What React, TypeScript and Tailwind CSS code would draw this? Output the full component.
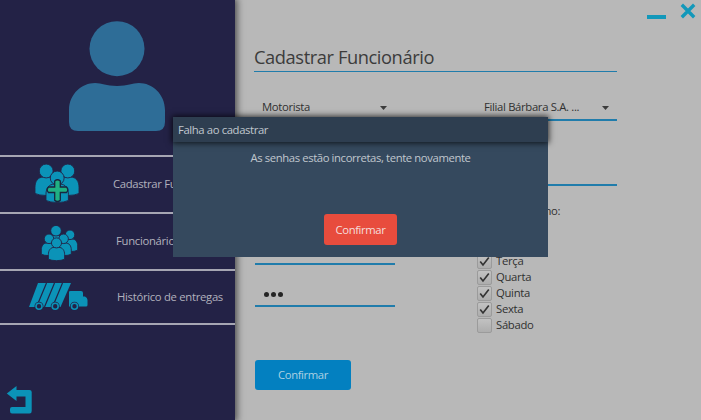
import React from "react";

function Person({ x, y, s }: { x: number; y: number; s: number }) {
  return (
    <g transform={`translate(${x} ${y}) scale(${s})`} stroke="#232246" strokeWidth={0.9 / s}>
      <path d="M-11 22V16C-11 10 -8 6 -3 6H3C8 6 11 10 11 16V22Q7 24 0 24T-11 22Z" />
      <circle cx="0" cy="0" r="6.8" />
    </g>
  );
}

function AddStaffIcon() {
  return (
    <svg className="mb-[2px] block h-[42px] w-[50px]" viewBox="0 0 50 42" fill="#0b93b8">
      <Person x={14.2} y={8} s={1.02} />
      <Person x={35.8} y={8} s={1.02} />
      <Person x={25.2} y={15} s={1.02} />
      <path d="M22.7 18Q25.5 15.5 28.3 18V24H34.5Q37.2 26.7 34.5 29.5H28.3V37.2Q25.5 39.8 22.7 37.2V29.5H16.5Q13.8 26.7 16.5 24H22.7Z" fill="#1fb183" stroke="#18253f" strokeWidth="1.3" />
    </svg>
  );
}

function StaffIcon() {
  return (
    <svg className="block h-[38px] w-[40px]" viewBox="0 0 40 38" fill="#0b93b8">
      <Person x={18} y={7.7} s={0.78} />
      <Person x={32} y={11.8} s={0.7} />
      <Person x={11} y={15.8} s={0.7} />
      <Person x={25.6} y={15.8} s={0.7} />
      <Person x={18.5} y={19.9} s={0.74} />
    </svg>
  );
}

function TruckIcon() {
  return (
    <svg className="block h-[30px] w-[60px]" viewBox="0 0 60 30" fill="#0b93b8">
      <path d="M10 1H43L32.5 25H1Z" />
      <path d="M18.5 1L8.5 25M26.5 1L16.5 25M34.5 1L24.5 25" stroke="#232246" strokeWidth="1.2" />
      <path d="M41 10Q41 9 42.5 9H53Q55 9 55 11V14.5H57Q59.5 15.5 59.5 18V23Q59.5 24.5 58 24.5H41Z" />
      {[11, 27.2, 46.5].map((x) => (
        <circle key={x} cx={x} cy="24.2" r="3.6" stroke="#232246" strokeWidth="1.8" />
      ))}
      {[11, 27.2, 46.5].map((x) => (
        <circle key={x} cx={x} cy="24.2" r="3" fill="#232246" stroke="#0b93b8" strokeWidth="1.6" />
      ))}
    </svg>
  );
}

function Sidebar() {
  return (
    <aside className="relative flex h-[420px] w-[235px] shrink-0 flex-col bg-[#232246] text-[11.3px] text-[#b1b1bd] shadow-[0_0_7px_2px_rgba(0,0,0,0.6)]">
      <div className="h-[155px] pt-[21px] pl-[68px]">
        <svg className="block h-[111px] w-[98px]" viewBox="0 0 98 111" fill="#2e6d97">
          <circle cx="49" cy="27.7" r="27.5" />
          <path d="M1 89C1 73 14 62 27 62C34 62 38 65 49 65S64 62 71 62C84 62 97 73 97 89V101Q97 110 88 110H10Q1 110 1 101Z" />
        </svg>
      </div>
      <nav className="flex flex-col border-b-2 border-[#a6a6b3]">
        <div className="flex h-[57px] items-center border-t-2 border-[#a6a6b3] pl-[32px]">
          <AddStaffIcon />
          <span className="ml-[31px] whitespace-nowrap tracking-[-0.32px]">Cadastrar Funcionário</span>
        </div>
        <div className="flex h-[57px] items-center border-t-2 border-[#a6a6b3] pl-[38px]">
          <StaffIcon />
          <span className="ml-[38px] tracking-[-0.3px]">Funcionários</span>
        </div>
        <div className="flex h-[54px] items-center border-t-2 border-[#a6a6b3] pl-[28px]">
          <TruckIcon />
          <span className="ml-[29px] whitespace-nowrap tracking-[-0.3px]">Histórico de entregas</span>
        </div>
      </nav>
      <button className="mt-auto mb-[6px] ml-[6px] h-[29px] w-[27px]">
        <svg className="block h-[29px] w-[27px]" viewBox="0 0 27 29" fill="#0b93b8">
          <path d="M0.8 8.5L10.5 1V5H23.5Q25.7 5 25.7 7V26Q25.7 28.5 23.5 28.5H6Q4 28.5 4 26V24Q4 22 6 22H19.5V11.5H10.5V16Z" />
        </svg>
      </button>
    </aside>
  );
}

function Select({ value }: { value: string }) {
  return (
    <div className="flex h-[26px] w-[140px] items-center justify-between border-b-2 border-[#207cab] pr-[8px] pl-[7px] tracking-[-0.33px] whitespace-nowrap">
      <span className="pt-px">{value}</span>
      <svg className="mt-px h-[4px] w-[7px]" viewBox="0 0 7 4" fill="#3c3c3c">
        <path d="M0 0H7L3.5 4Z" />
      </svg>
    </div>
  );
}

function Check({ label, checked }: { label: string; checked: boolean }) {
  return (
    <label className="flex h-4 items-center gap-[4px]">
      <span className="flex h-[15px] w-[15px] items-center justify-center rounded-[2px] border border-[#9b9b9b] bg-linear-to-b from-[#c2c2c2] to-[#adadad]">
        {checked && (
          <svg className="h-[11px] w-[11px]" viewBox="0 0 11 11" fill="none" stroke="#343434" strokeWidth="1.7">
            <path d="M1.2 5.5L4 9L9.8 1.5" />
          </svg>
        )}
      </span>
      <span>{label}</span>
    </label>
  );
}

const days = [
  { label: "Segunda", checked: true },
  { label: "Terça", checked: true },
  { label: "Quarta", checked: true },
  { label: "Quinta", checked: true },
  { label: "Sexta", checked: true },
  { label: "Sábado", checked: false },
];

function Form() {
  return (
    <main className="h-[420px] flex-1 text-[11.3px] text-[#303030]">
      <div className="flex h-[44px] items-start justify-end gap-[14px] pt-[3px] pr-[5px]">
        <svg className="mt-[12px] h-[4px] w-[19px]" viewBox="0 0 19 4">
          <rect width="19" height="4" fill="#1298ba" />
        </svg>
        <svg className="h-[16px] w-[16px]" viewBox="0 0 16 16" stroke="#1298ba" strokeWidth="3.4">
          <path d="M1.8 1.8L14.2 14.2M14.2 1.8L1.8 14.2" />
        </svg>
      </div>
      <h1 className="ml-[19px] h-[27px] w-[363px] text-[18.3px] leading-[26px] tracking-[-0.42px] text-[#3c3c3c]">
        Cadastrar Funcionário
      </h1>
      <div className="ml-[19px] h-px w-[363px] bg-[#207cab]" />
      <div className="ml-[20px] flex gap-[82px] pt-[23px]">
        <section className="w-[140px]">
          <Select value="Motorista" />
          <div className="h-[64px] border-b-2 border-[#207cab]" />
          <div className="h-[80px] border-b-2 border-[#207cab]" />
          <div className="flex h-[42px] items-center gap-[2px] border-b-2 border-[#207cab] pt-[18px] pl-[9px]">
            <i className="h-[5px] w-[5px] rounded-full bg-[#242424]" />
            <i className="h-[5px] w-[5px] rounded-full bg-[#242424]" />
            <i className="h-[5px] w-[5px] rounded-full bg-[#242424]" />
          </div>
          <button className="mt-[53px] h-[30px] w-[96px] rounded-[3px] bg-[#0380c0] pt-px tracking-[-0.4px] text-[#acd0e2]">Confirmar</button>
        </section>
        <section className="w-[140px]">
          <Select value="Filial Bárbara S.A. ..." />
          <div className="h-[65px] border-b-2 border-[#207cab]" />
          <p className="mt-[17px] h-[16px] w-[84px] leading-[15px] tracking-[-0.38px] whitespace-nowrap">Dias de trabalho:</p>
          <div className="mt-[18px] flex flex-col tracking-[-0.3px]">
            {days.map((d) => (
              <Check key={d.label} {...d} />
            ))}
          </div>
        </section>
      </div>
    </main>
  );
}

function Dialog() {
  return (
    <div role="dialog" className="absolute top-[117px] left-[173px] flex h-[140px] w-[375px] flex-col items-center bg-[#35495e] text-[11.3px] text-[#c0c7ce]">
      <header className="h-[25px] w-full bg-[#2e3e50] pl-[5px] leading-[26px] tracking-[-0.38px] shadow-[0_0_6px_1px_rgba(0,0,0,0.75)]">Falha ao cadastrar</header>
      <p className="mt-[8px] h-[17px] leading-[15px] tracking-[-0.39px] whitespace-nowrap">As senhas estão incorretas, tente novamente</p>
      <button className="mt-[47px] h-[31px] w-[73px] rounded-[3px] bg-[#e84c3d] pt-px tracking-[-0.4px] text-[#f5dedc]">Confirmar</button>
    </div>
  );
}

export default function App() {
  return (
    <div className="relative flex h-[420px] w-[701px] overflow-hidden bg-[#b8b8b8] font-['Open_Sans','Noto_Sans',sans-serif]">
      <Sidebar />
      <Form />
      <Dialog />
    </div>
  );
}
